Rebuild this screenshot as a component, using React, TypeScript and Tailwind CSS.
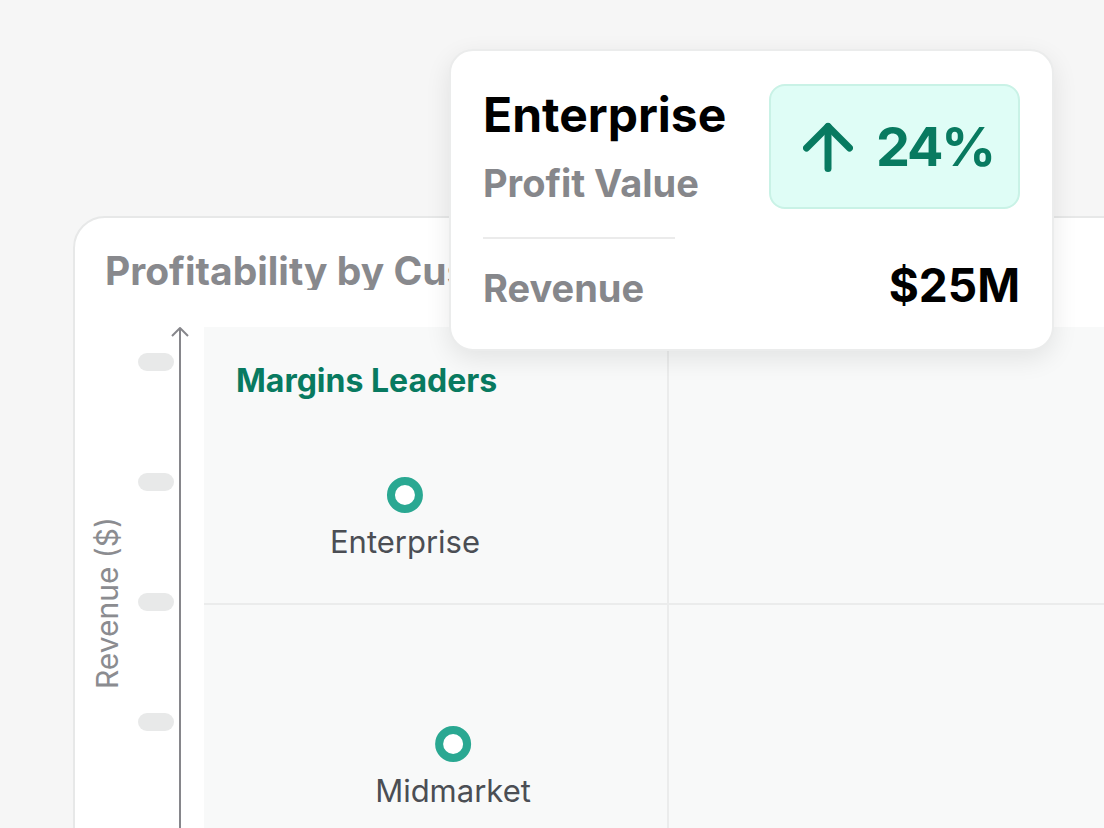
import React from "react";

const pills = [0, 1, 2, 3];

const Dot = ({ label }: { label: string }) => (
  <div className="flex flex-col items-center">
    <div className="h-[36px] w-[36px] rounded-full border-[8px] border-[#2aa892] bg-white" />
    <p className="mt-[13px] text-[31px] leading-none text-[#4b4e54]">{label}</p>
  </div>
);

const App = () => {
  return (
    <div
      className="relative h-[828px] w-full overflow-hidden bg-[#f6f6f6]"
      style={{ fontFamily: "Inter, 'Noto Sans', sans-serif" }}
    >
      {/* chart card */}
      <div className="ml-[73px] mt-[216px] h-[760px] w-[1100px] rounded-[32px] border-2 border-[#e7e8e8] bg-white">
        <div className="pl-[30px] pt-[33px]">
          <h2 className="w-[344px] overflow-hidden whitespace-nowrap text-[39px] font-bold leading-none text-[#88898d]">
            Profitability by Customer Segment
          </h2>
        </div>
        <div className="mt-[37px] flex">
          <div className="flex h-[552px]">
            <div className="flex w-[63px] items-center justify-center">
              <span className="rotate-180 text-[30px] leading-none text-[#8b8c90] [writing-mode:vertical-rl]">
                Revenue ($)
              </span>
            </div>
            <div className="flex w-[36px] flex-col gap-[102px] pt-[26px]">
              {pills.map((p) => (
                <div key={p} className="h-[18px] w-[36px] rounded-full bg-[#e8e9e9]" />
              ))}
            </div>
            <svg width="12" height="552" className="overflow-visible">
              <path d="M6 1 V552" stroke="#86868b" strokeWidth="2" fill="none" />
              <path d="M-2 9 L6 1 L14 9" stroke="#86868b" strokeWidth="2" fill="none" strokeLinejoin="round" />
            </svg>
          </div>
          <div className="ml-[18px] grid flex-1 grid-cols-[463px_1fr] grid-rows-[276px_276px] gap-[2px] bg-[#ebecec]">
            <div className="relative bg-[#f8f9f9]">
              <p className="pl-[32px] pt-[38px] text-[32px] font-bold leading-none text-[#087a60]">
                Margins Leaders
              </p>
              <div className="absolute left-[201px] top-[150px] -translate-x-1/2">
                <Dot label="Enterprise" />
              </div>
            </div>
            <div className="bg-[#f8f9f9]" />
            <div className="relative bg-[#f8f9f9]">
              <div className="absolute left-[249px] top-[121px] -translate-x-1/2">
                <Dot label="Midmarket" />
              </div>
            </div>
            <div className="bg-[#f8f9f9]" />
          </div>
        </div>
      </div>

      {/* tooltip */}
      <div className="absolute left-[449px] top-[49px] h-[302px] w-[605px] rounded-[24px] border-2 border-[#ebecec] bg-white px-[32px] pt-[33px] shadow-[0_8px_26px_rgba(0,0,0,0.09)]">
        <div className="flex items-start justify-between">
          <div className="pt-[7px]">
            <p className="text-[48px] font-bold leading-none text-black">Enterprise</p>
            <p className="mt-[25px] text-[38px] font-bold leading-none text-[#86878b]">Profit Value</p>
            <div className="mt-[35px] h-[2px] w-[192px] bg-[#ebebeb]" />
          </div>
          <div className="flex h-[125px] w-[251px] items-center gap-[23px] rounded-[16px] border-2 border-[#c9f2e6] bg-[#dffdf6] pl-[32px] text-[#087a60]">
            <svg width="50" height="50" viewBox="0 0 50 50" fill="none" stroke="currentColor" strokeWidth="7" strokeLinecap="round" strokeLinejoin="round">
              <path d="M3.5 26 L25 4.5 L46.5 26" />
              <path d="M25 4.5 V46.5" />
            </svg>
            <span className="text-[54px] font-bold leading-none tracking-[-0.04em]">24%</span>
          </div>
        </div>
        <div className="mt-[23px] flex items-baseline justify-between">
          <p className="text-[38px] font-bold leading-none text-[#86878b]">Revenue</p>
          <p className="text-[46px] font-bold leading-none text-black">$25M</p>
        </div>
      </div>
    </div>
  );
};

export default App;
